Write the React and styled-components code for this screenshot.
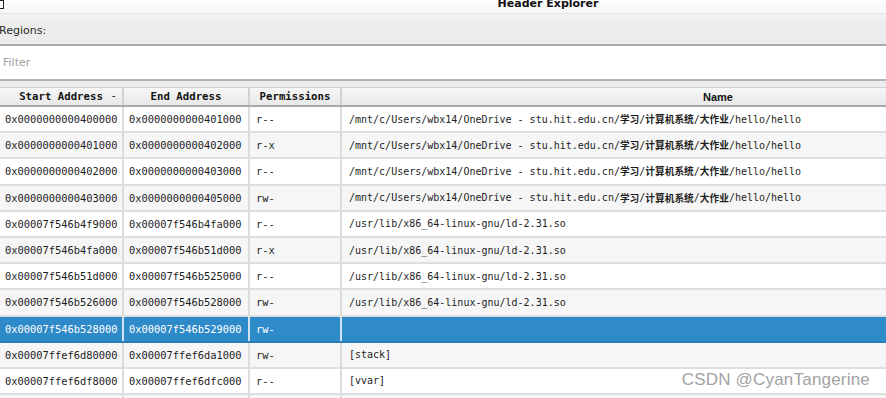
import styled, { createGlobalStyle } from "styled-components"

const rows = [
    { start: "0x0000000000400000", end: "0x0000000000401000", perm: "r--", name: "hit" },
    { start: "0x0000000000401000", end: "0x0000000000402000", perm: "r-x", name: "hit" },
    { start: "0x0000000000402000", end: "0x0000000000403000", perm: "r--", name: "hit" },
    { start: "0x0000000000403000", end: "0x0000000000405000", perm: "rw-", name: "hit" },
    { start: "0x00007f546b4f9000", end: "0x00007f546b4fa000", perm: "r--", name: "/usr/lib/x86_64-linux-gnu/ld-2.31.so" },
    { start: "0x00007f546b4fa000", end: "0x00007f546b51d000", perm: "r-x", name: "/usr/lib/x86_64-linux-gnu/ld-2.31.so" },
    { start: "0x00007f546b51d000", end: "0x00007f546b525000", perm: "r--", name: "/usr/lib/x86_64-linux-gnu/ld-2.31.so" },
    { start: "0x00007f546b526000", end: "0x00007f546b528000", perm: "rw-", name: "/usr/lib/x86_64-linux-gnu/ld-2.31.so" },
    { start: "0x00007f546b528000", end: "0x00007f546b529000", perm: "rw-", name: "", selected: true },
    { start: "0x00007ffef6d80000", end: "0x00007ffef6da1000", perm: "rw-", name: "[stack]" },
    { start: "0x00007ffef6df8000", end: "0x00007ffef6dfc000", perm: "r--", name: "[vvar]" },
    { start: "", end: "", perm: "", name: "" },
]

// the path with the chinese folder names, those are drawn bold
const HitPath = () => (
    <>
        /mnt/c/Users/wbx14/OneDrive - stu.hit.edu.cn/<Cjk>学习</Cjk>/<Cjk>计算机系统</Cjk>/<Cjk>大作业</Cjk>/hello/hello
    </>
)

const App = () => {
    return (
        <Frame>
            <GlobalStyle />
            <Window>
                <TitleBar>
                    <Corner />
                    <Title>Header Explorer</Title>
                </TitleBar>
                <RegionsBar>Regions:</RegionsBar>
                <FilterBox>Filter</FilterBox>
                <Spacer />
                <Table>
                    <HeadRow>
                        <HeadCell mono>
                            Start Address
                            <SortMark>-</SortMark>
                        </HeadCell>
                        <HeadCell mono>End Address</HeadCell>
                        <HeadCell mono>Permissions</HeadCell>
                        <HeadCell>Name</HeadCell>
                    </HeadRow>
                    {rows.map((r, i) => (
                        <Row key={i} $alt={i % 2 === 1} $selected={r.selected}>
                            <Cell>{r.start}</Cell>
                            <Cell>{r.end}</Cell>
                            <Cell>{r.perm}</Cell>
                            <NameCell>{r.name === "hit" ? <HitPath /> : r.name}</NameCell>
                        </Row>
                    ))}
                </Table>
            </Window>
            <Watermark>CSDN @CyanTangerine</Watermark>
        </Frame>
    )
}
export default App

const GlobalStyle = createGlobalStyle`
    html, body {
        margin: 0;
        padding: 0;
        overflow: hidden;
        background: #fff;
    }
`
const Frame = styled.div`
    position: relative;
    width: 886px;
    height: 398px;
    overflow: hidden;
`
const Window = styled.div`
    width: 1096px;
    display: flex;
    flex-direction: column;
    font-family: "DejaVu Sans", sans-serif;
`
const TitleBar = styled.div`
    height: 13px;
    display: flex;
    position: relative;
    overflow: hidden;
    background: linear-gradient(#ffffff, #f6f6f6);
`
const Corner = styled.span`
    position: absolute;
    left: -3px;
    top: 0;
    width: 5px;
    height: 7px;
    border: 1px solid #222;
`
const Title = styled.div`
    flex: 1;
    text-align: center;
    font-weight: bold;
    font-size: 11px;
    line-height: 7px;
    color: #111;
`
const RegionsBar = styled.div`
    height: 27px;
    display: flex;
    align-items: center;
    padding-top: 3px;
    margin-left: -1px;
    font-size: 11px;
    color: #2a2a2a;
    background: linear-gradient(#f4f4f4, #ececec 30%, #ececec);
    border-top: 1px solid #e2e2e2;
    border-bottom: 2px solid #a9a9a9;
`
const FilterBox = styled.div`
    height: 33px;
    display: flex;
    align-items: center;
    padding-left: 3px;
    font-size: 11px;
    color: #a0a0a0;
    background: #fff;
    border-bottom: 2px solid #b3b3b3;
`
const Spacer = styled.div`
    height: 6px;
    background: #ededed;
    border-bottom: 1px solid #cfcfcf;
`
const Table = styled.div`
    display: flex;
    flex-direction: column;
`
const HeadRow = styled.div`
    display: grid;
    grid-template-columns: 124px 126px 92px 1fr;
    height: 17px;
    background: linear-gradient(#f7f7f7, #e8e8e8);
    border-bottom: 2px solid #a8a8a8;
`
const HeadCell = styled.div`
    position: relative;
    display: flex;
    align-items: center;
    justify-content: center;
    border-right: 2px solid #d2d2d2;
    font-family: ${p => p.mono ? '"DejaVu Sans Mono", monospace' : '"Liberation Sans", sans-serif'};
    font-weight: bold;
    font-size: ${p => p.mono ? "10.7px" : "11px"};
    color: #111;
`
const SortMark = styled.span`
    position: absolute;
    right: 5px;
    top: 1px;
    font-weight: normal;
`
const Row = styled.div`
    display: grid;
    grid-template-columns: 124px 126px 92px 1fr;
    height: 24.2px;
    border-bottom: 2px solid ${p => p.$selected ? "#2a7fba" : "#dedede"};
    background: ${p => p.$selected ? "#2f8ac9" : p.$alt ? "#f6f6f6" : "#ffffff"};
    color: ${p => p.$selected ? "#ffffff" : "#1d1d1d"};

    & > div {
        border-right-color: ${p => p.$selected ? "#cfe3f2" : "#dcdcdc"};
    }
`
const Cell = styled.div`
    display: flex;
    align-items: center;
    padding-left: 5px;
    border-right: 2px solid #dcdcdc;
    font-family: "DejaVu Sans Mono", monospace;
    font-size: 10.4px;
    white-space: pre;
    overflow: hidden;

    &:nth-child(3) {
        padding-left: 6px;
    }
`
const NameCell = styled(Cell)`
    padding-left: 7px;
    font-size: 10px;
`
const Cjk = styled.b`
    font-family: "Noto Sans CJK SC", sans-serif;
    font-weight: bold;
    font-size: 9.7px;
`
const Watermark = styled.div`
    position: absolute;
    right: 16px;
    bottom: 8px;
    font-family: "Liberation Sans", sans-serif;
    font-size: 17px;
    color: #a2a2a2;
    letter-spacing: 0.2px;
`
